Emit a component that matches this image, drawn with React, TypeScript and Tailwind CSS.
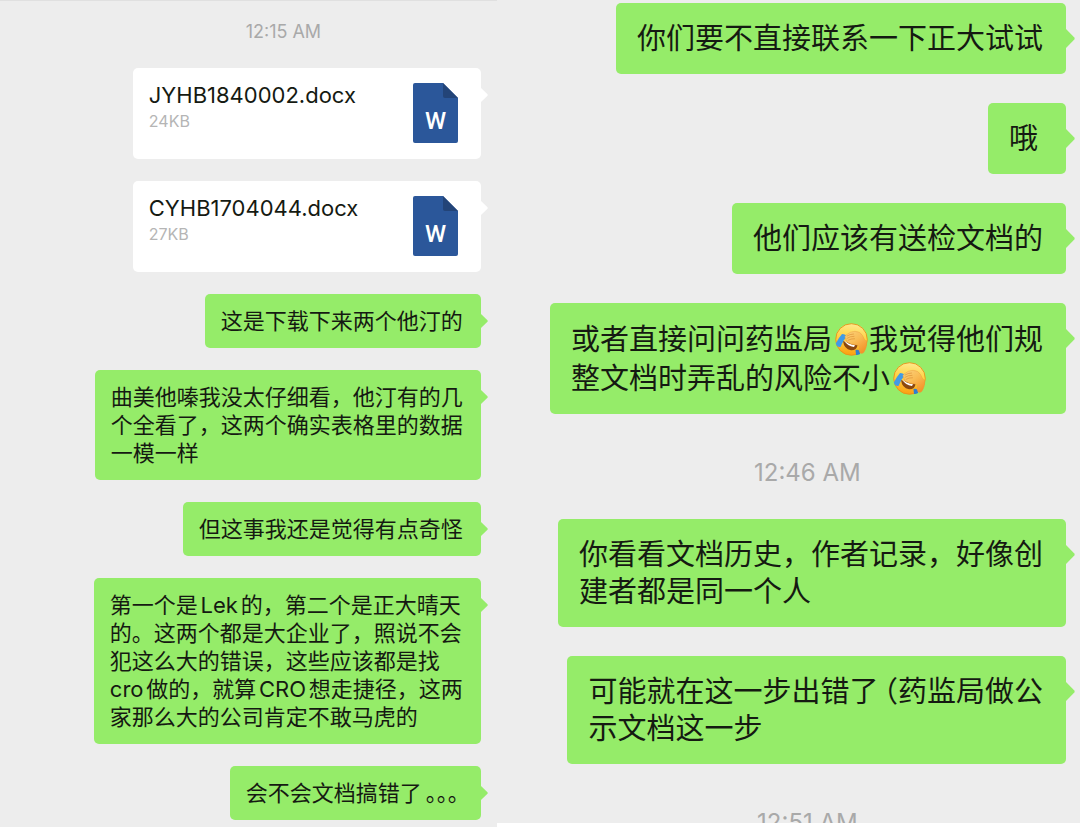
import clsx from "clsx";
import type { ReactNode } from "react";

type Size = "sm" | "lg";

export default function App() {
  return (
    <main className="flex h-screen items-start overflow-hidden bg-white font-[Inter,'Noto_Sans_CJK_SC',sans-serif] text-[#151a12]">
      {/* first chat */}
      <section className="flex h-full w-[46%] flex-col items-end gap-[22px] border-t border-[#e0e0e0] bg-[#ededed] pt-[17px] pr-4 pl-[86px]">
        <Time size="sm">12:15 AM</Time>
        <FileCard name="JYHB1840002.docx" weight="24KB" />
        <FileCard name="CYHB1704044.docx" weight="27KB" />
        <Bubble size="sm">这是下载下来两个他汀的</Bubble>
        <Bubble size="sm">
          {"曲美他嗪我没太仔细看，他汀有的几\n个全看了，这两个确实表格里的数据\n一模一样"}
        </Bubble>
        <Bubble size="sm">但这事我还是觉得有点奇怪</Bubble>
        <Bubble size="sm">
          {"第一个是Lek的，第二个是正大晴天\n的。这两个都是大企业了，照说不会\n犯这么大的错误，这些应该都是找\ncro做的，就算CRO想走捷径，这两\n家那么大的公司肯定不敢马虎的"}
        </Bubble>
        <Bubble size="sm">
          会不会文档搞错了
          <span className="px-1 [font-feature-settings:'halt']">。。。</span>
        </Bubble>
      </section>

      {/* second chat */}
      <section className="flex h-[calc(100%-4px)] flex-1 flex-col items-end gap-[29px] overflow-hidden bg-[#ededed] pt-[3px] pr-[14px] pl-[52px]">
        <Bubble size="lg">你们要不直接联系一下正大试试</Bubble>
        <Bubble size="lg">哦</Bubble>
        <Bubble size="lg">他们应该有送检文档的</Bubble>
        <Bubble size="lg" className="pt-[17px] pb-4 leading-[39px]">
          或者直接问问药监局
          <Facepalm />
          {"我觉得他们规\n整文档时弄乱的风险不小"}
          <Facepalm />
        </Bubble>
        <Time size="lg">12:46 AM</Time>
        <Bubble size="lg">{"你看看文档历史，作者记录，好像创\n建者都是同一个人"}</Bubble>
        <Bubble size="lg">
          可能就在这一步出错了
          <span className="pl-[5px] [font-feature-settings:'halt']">（</span>
          {"药监局做公\n示文档这一步"}
        </Bubble>
        <Time size="lg">12:51 AM</Time>
      </section>
    </main>
  );
}

function Time({ size, children }: { size: Size; children: ReactNode }) {
  return (
    <time
      className={clsx(
        "shrink-0 self-center text-[#a9a9a9]",
        size === "sm" ? "text-[18px] leading-7" : "pt-3 text-[24px] leading-[35px]"
      )}
    >
      {children}
    </time>
  );
}

function Bubble({
  size,
  className,
  children,
}: {
  size: Size;
  className?: string;
  children: ReactNode;
}) {
  return (
    <div
      className={clsx(
        "relative shrink-0 whitespace-pre-line rounded-[5px] bg-[#95ec69] [text-autospace:normal]",
        size === "sm"
          ? "py-[13px] pr-[18px] pl-4 text-[22px] leading-7"
          : "min-w-[78px] pr-[23px] pl-[21px] text-[29px]",
        size === "lg" && (className ?? "py-[17px] leading-[37px]")
      )}
    >
      {children}
      <Tail size={size} className="fill-[#95ec69]" />
    </div>
  );
}

function Tail({ size, className }: { size: Size; className: string }) {
  return (
    <svg
      viewBox="0 0 8 16"
      preserveAspectRatio="none"
      className={clsx(
        "absolute left-full",
        size === "sm" ? "top-5 h-[14px] w-[7px]" : "top-[26px] h-[19px] w-[9px]",
        className
      )}
    >
      <path d="M0 0 L7.4 7.2 Q8 8 7.4 8.8 L0 16 Z" />
    </svg>
  );
}

function FileCard({ name, weight }: { name: string; weight: string }) {
  return (
    <div className="relative flex h-[91px] w-[348px] shrink-0 items-start justify-between rounded-[5px] bg-white pt-[13px] pr-[23px] pl-4">
      <div>
        <p className="text-[22px] leading-7">{name}</p>
        <p className="text-[16px] leading-6 text-[#b5b5b5]">{weight}</p>
      </div>
      <WordIcon />
      <Tail size="sm" className="fill-white" />
    </div>
  );
}

function WordIcon() {
  return (
    <svg viewBox="0 0 45 60" className="mt-[2px] h-[60px] w-[45px]">
      <path
        d="M2 0 H30 L45 15 V58 Q45 60 43 60 H2 Q0 60 0 58 V2 Q0 0 2 0 Z"
        fill="#2b579a"
      />
      <path d="M30 0 L45 15 H32 Q30 15 30 13 Z" fill="#234478" />
      <text
        x="22.5"
        y="46"
        textAnchor="middle"
        fontFamily="Roboto"
        fontSize="24"
        fontWeight="500"
        fill="#fff"
      >
        W
      </text>
    </svg>
  );
}

// laughing face with a hand over the eyes
function Facepalm() {
  return (
    <svg
      viewBox="0 0 33 33"
      className="mr-px ml-[3px] inline-block h-[33px] w-[33px] align-[-6px]"
    >
      <defs>
        <linearGradient id="face" x1="0.5" y1="0" x2="0.4" y2="1">
          <stop offset="0" stopColor="#ffe98c" />
          <stop offset="0.45" stopColor="#ffd243" />
          <stop offset="1" stopColor="#fb9f10" />
        </linearGradient>
        <linearGradient id="hand" x1="0" y1="0" x2="0.7" y2="1">
          <stop offset="0" stopColor="#fbd27c" />
          <stop offset="0.5" stopColor="#f9bc56" />
          <stop offset="1" stopColor="#f3952a" />
        </linearGradient>
      </defs>
      <circle cx="16.5" cy="16.5" r="15.8" fill="url(#face)" stroke="#e8921a" strokeWidth="0.9" />
      {/* mouth */}
      <path d="M8 18 Q14 20 22.500 22 Q22 27.500 16 27.300 Q9 26 8 18 Z" fill="#8a4710" />
      <path d="M9 17.500 Q13 21 20 22.300 L19 24 Q12.500 23 9 17.500 Z" fill="#fff" />
      {/* tears */}
      <path d="M7 11 Q11 11 11.500 13.500 Q8 17.500 5.500 24 Q2 24.500 0.800 20.500 Q3.500 15 7 11 Z" fill="#419be6" />
      <path d="M20.500 27 Q23 26 25 28 L25 31 Q23 32.300 21 32 Z" fill="#2f7fd0" />
      {/* hand and wrist */}
      <path
        d="M12 11.500 Q15 8.500 20 8.300 Q25.500 8.500 27.500 12.500 Q29 16.500 31.500 18.500 Q32.500 24 28.800 29.500 Q27 31 25 30 Q23 27 24.500 24 Q24 22.300 22 22.100 Q15 21.500 11.500 18.500 Q10.500 17.500 12 17.300 Q9.500 16.200 10.500 15 Q9 13.500 10.500 13 Q10.500 12 12 11.500 Z"
        fill="url(#hand)"
        stroke="#e9973a"
        strokeWidth="0.4"
      />
      <path
        d="M12 13 Q15 11 18.500 11 M12 15.300 Q15 13.200 19 13.300 M13 17.300 Q16 15.500 19.500 15.700"
        fill="none"
        stroke="#dd9238"
        strokeWidth="0.7"
        strokeLinecap="round"
      />
    </svg>
  );
}
